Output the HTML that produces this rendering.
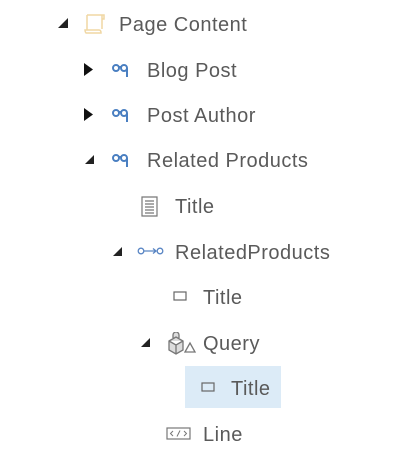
<!DOCTYPE html>
<html><head><style>
body{margin:0;width:404px;height:466px;background:#fff;position:relative;overflow:hidden;font-family:"Liberation Sans",sans-serif;}
.t{position:absolute;font-size:20px;letter-spacing:0.5px;color:#5a5a5a;line-height:20px;white-space:nowrap}
svg{position:absolute}
</style></head><body>
<div style="position:absolute;left:185px;top:366px;width:96px;height:42px;background:#dcebf7"></div>

<svg style="left:58px;top:18px" width="10" height="10"><polygon points="10,0 10,10 0,10" fill="#222"/></svg>
<svg style="left:82px;top:13px" width="24" height="22"><path d="M5 2h15v14M5 2v15h12M3 17h14q2 0 2 3H4q-1-1-1-3z M20 2h2v4h-2" fill="none" stroke="#f0d7a4" stroke-width="1.5"/></svg>
<div class="t" style="left:119px;top:15px">Page Content</div>

<svg style="left:84px;top:63px" width="9" height="13"><polygon points="0,0 9,6.5 0,13" fill="#111"/></svg>
<svg style="left:111px;top:62px" width="24" height="16"><path d="M2 6a3 3 0 0 1 6 0a3 3 0 0 1-6 0M10 6a3 3 0 0 1 6 0a3 3 0 0 1-6 0M8 5h2M16 6v9" fill="none" stroke="#4a7fc1" stroke-width="2"/></svg>
<div class="t" style="left:147px;top:61px">Blog Post</div>

<svg style="left:84px;top:108px" width="9" height="13"><polygon points="0,0 9,6.5 0,13" fill="#111"/></svg>
<svg style="left:111px;top:107px" width="24" height="16"><path d="M2 6a3 3 0 0 1 6 0a3 3 0 0 1-6 0M10 6a3 3 0 0 1 6 0a3 3 0 0 1-6 0M8 5h2M16 6v9" fill="none" stroke="#4a7fc1" stroke-width="2"/></svg>
<div class="t" style="left:147px;top:106px">Post Author</div>

<svg style="left:85px;top:155px" width="9" height="9"><polygon points="9,0 9,9 0,9" fill="#222"/></svg>
<svg style="left:111px;top:152px" width="24" height="16"><path d="M2 6a3 3 0 0 1 6 0a3 3 0 0 1-6 0M10 6a3 3 0 0 1 6 0a3 3 0 0 1-6 0M8 5h2M16 6v9" fill="none" stroke="#4a7fc1" stroke-width="2"/></svg>
<div class="t" style="left:147px;top:151px">Related Products</div>

<svg style="left:141px;top:196px" width="18" height="21"><path d="M1 1h15v19H1zM4 5h9M4 8h9M4 11h9M4 14h9M4 17h9" fill="none" stroke="#777" stroke-width="1.2"/></svg>
<div class="t" style="left:175px;top:197px">Title</div>

<svg style="left:113px;top:247px" width="9" height="9"><polygon points="9,0 9,9 0,9" fill="#222"/></svg>
<svg style="left:137px;top:245px" width="28" height="12"><circle cx="4" cy="6" r="2.8" fill="none" stroke="#5a86c4" stroke-width="1.3"/><circle cx="23" cy="6" r="2.8" fill="none" stroke="#5a86c4" stroke-width="1.3"/><path d="M7 6h12M16 3.5l3 2.5-3 2.5" fill="none" stroke="#5a86c4" stroke-width="1.3"/></svg>
<div class="t" style="left:175px;top:243px">RelatedProducts</div>

<svg style="left:173px;top:291px" width="14" height="11"><rect x="1" y="1" width="12" height="8" fill="none" stroke="#666" stroke-width="1.2"/></svg>
<div class="t" style="left:203px;top:288px">Title</div>

<svg style="left:141px;top:338px" width="9" height="9"><polygon points="9,0 9,9 0,9" fill="#222"/></svg>
<svg style="left:165px;top:332px" width="32" height="24"><path d="M4 9l7-4 7 4v9l-7 4-7-4zM4 9l7 4 7-4M11 13v9M8 6V3a3 3 0 0 1 6 0v3" fill="#ddd" stroke="#777" stroke-width="1.3"/><path d="M20 20l5-9 5 9z" fill="none" stroke="#777" stroke-width="1.3"/></svg>
<div class="t" style="left:203px;top:334px">Query</div>

<svg style="left:201px;top:382px" width="14" height="11"><rect x="1" y="1" width="12" height="8" fill="none" stroke="#666" stroke-width="1.2"/></svg>
<div class="t" style="left:231px;top:379px">Title</div>

<svg style="left:166px;top:427px" width="25" height="14"><rect x="1" y="1" width="23" height="11" fill="none" stroke="#777" stroke-width="1.2"/><path d="M7 4l-2.5 2.5L7 9M18 4l2.5 2.5L18 9M14 3.5l-3 6" fill="none" stroke="#777" stroke-width="1"/></svg>
<div class="t" style="left:203px;top:425px">Line</div>
</body></html>
